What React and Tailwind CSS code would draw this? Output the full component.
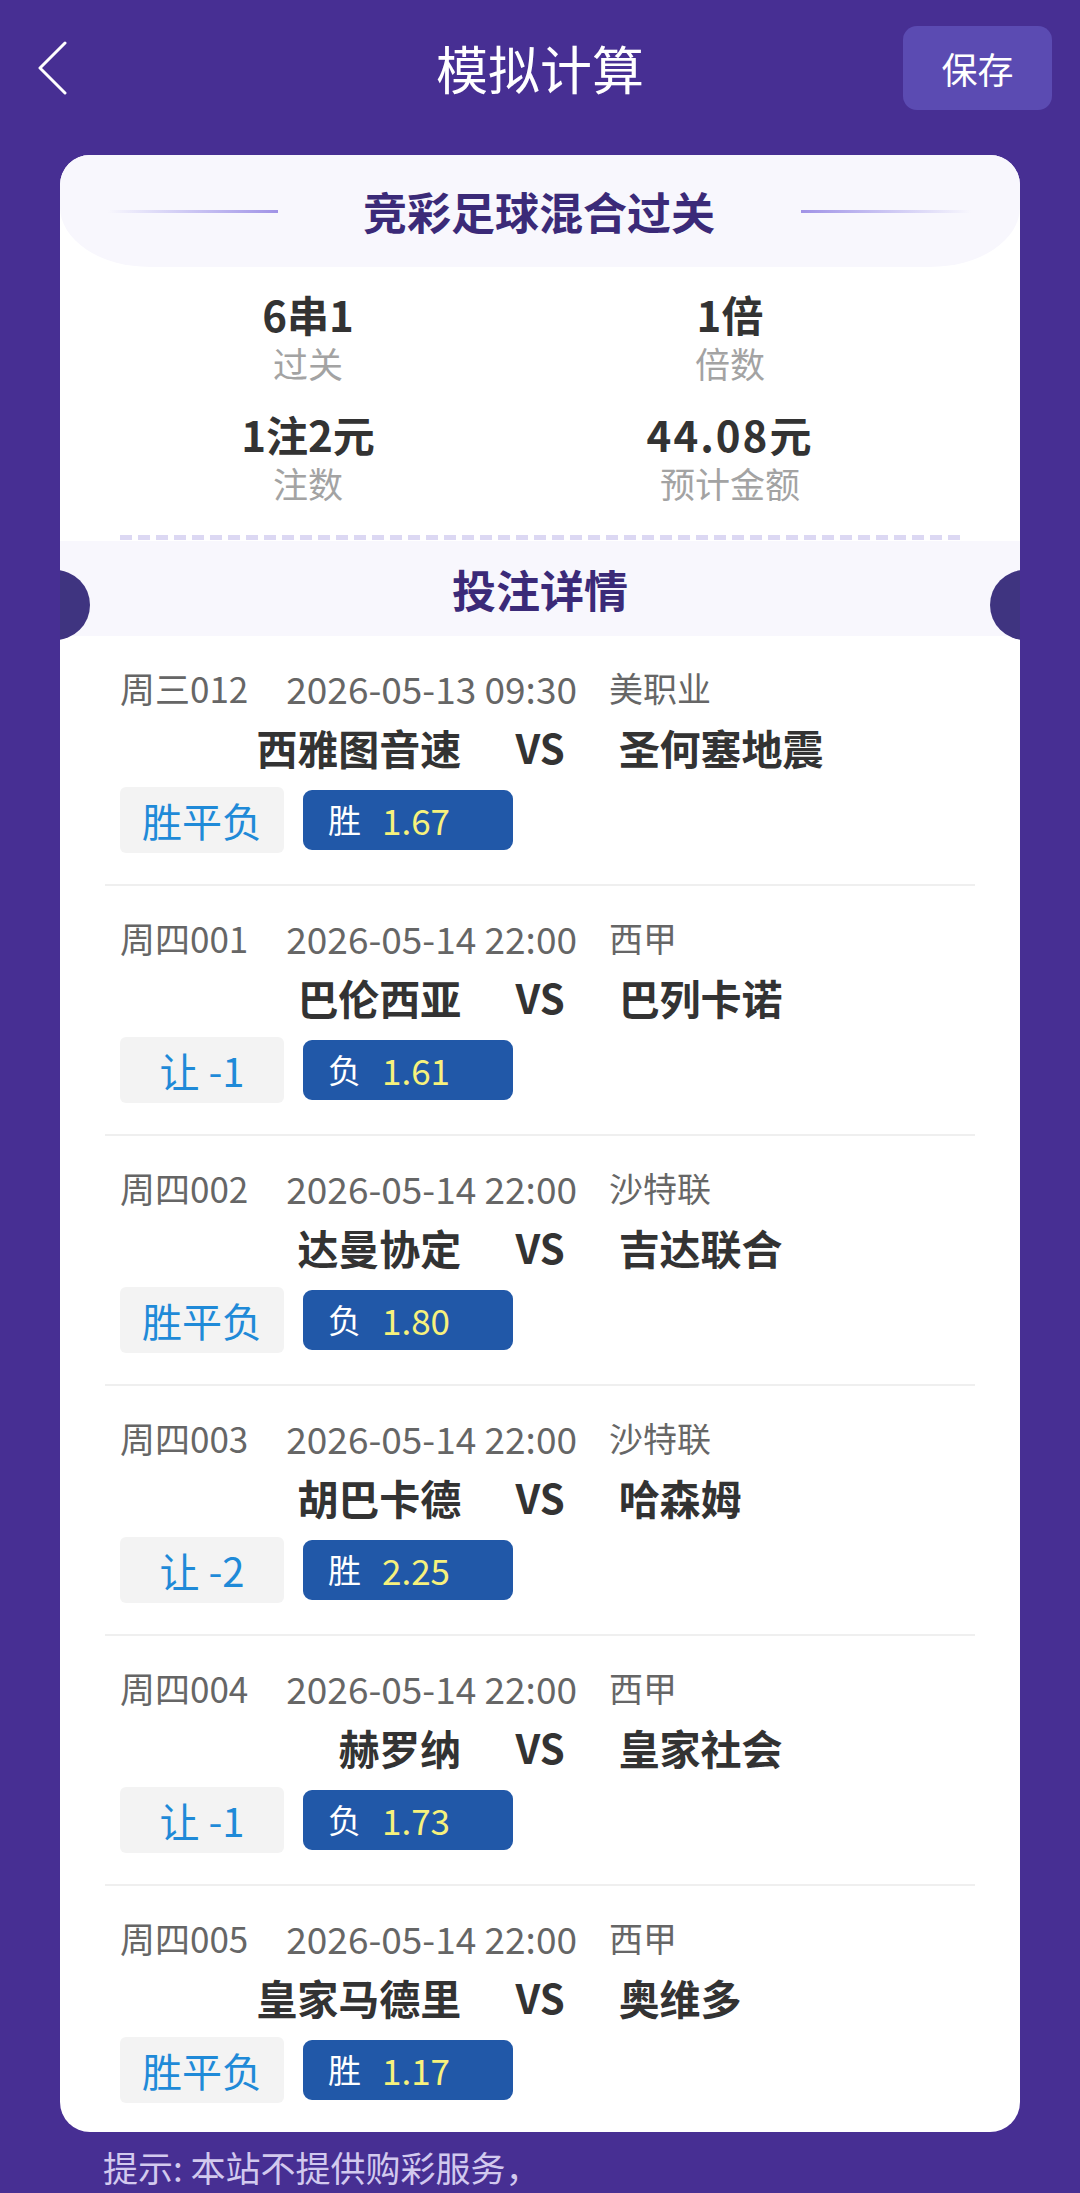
import React from "react";

const matches = [
  { code: "周三012", time: "2026-05-13 09:30", league: "美职业", home: "西雅图音速", away: "圣何塞地震", type: "胜平负", pick: "胜", odds: "1.67" },
  { code: "周四001", time: "2026-05-14 22:00", league: "西甲", home: "巴伦西亚", away: "巴列卡诺", type: "让 -1", pick: "负", odds: "1.61" },
  { code: "周四002", time: "2026-05-14 22:00", league: "沙特联", home: "达曼协定", away: "吉达联合", type: "胜平负", pick: "负", odds: "1.80" },
  { code: "周四003", time: "2026-05-14 22:00", league: "沙特联", home: "胡巴卡德", away: "哈森姆", type: "让 -2", pick: "胜", odds: "2.25" },
  { code: "周四004", time: "2026-05-14 22:00", league: "西甲", home: "赫罗纳", away: "皇家社会", type: "让 -1", pick: "负", odds: "1.73" },
  { code: "周四005", time: "2026-05-14 22:00", league: "西甲", home: "皇家马德里", away: "奥维多", type: "胜平负", pick: "胜", odds: "1.17" },
];

function MatchRow({ m, last }) {
  return (
    <div className={last ? "pt-[30px] pb-[29px]" : "pt-[30px]"}>
      <div className="flex items-center pl-[60px] h-[44px] leading-[44px] text-[#666666] whitespace-nowrap">
        <span className="text-[35px]">{m.code}</span>
        <span className="ml-[38px] text-[37px]">{m.time}</span>
        <span className="ml-[32px] text-[34px]">{m.league}</span>
      </div>
      <div className="mt-[12px] grid grid-cols-[1fr_auto_1fr] gap-x-[54px] items-center h-[50px] text-[41px] leading-[50px] font-bold text-[#333333]">
        <span className="text-right">{m.home}</span>
        <span className="text-[40px]">VS</span>
        <span className="text-left">{m.away}</span>
      </div>
      <div className="mt-[15px] flex items-center pl-[60px] gap-[19px]">
        <div className="w-[164px] h-[66px] rounded-[6px] bg-[#f3f3f3] flex items-center justify-center text-[40px] text-[#1f8ad8] whitespace-nowrap">
          {m.type}
        </div>
        <div className="w-[210px] h-[60px] rounded-[9px] bg-[#2158a8] flex items-center pl-[25px]">
          <span className="text-[33px] text-white">{m.pick}</span>
          <span className="ml-[21px] text-[35px] text-[#f7f17c]">{m.odds}</span>
        </div>
      </div>
      {!last && <div className="mt-[31px] mx-[45px] h-[2px] bg-[#efefef]" />}
    </div>
  );
}

export default function App() {
  return (
    <div
      className="w-[1080px] h-[2193px] overflow-hidden bg-[#472f93] relative"
      style={{ fontFamily: '"Noto Sans CJK SC", "Noto Sans", sans-serif' }}
    >
      {/* Header */}
      <div className="grid grid-cols-[1fr_auto_1fr] items-center pt-[26px] h-[110px]">
        <div className="pl-[38px] flex items-center">
          <svg width="30" height="54" viewBox="0 0 30 54" fill="none">
            <polyline points="27,2 2,27 27,52" stroke="white" strokeWidth="3" strokeLinecap="round" strokeLinejoin="round" />
          </svg>
        </div>
        <div className="text-[52px] leading-[64px] text-white">模拟计算</div>
        <div className="flex justify-end pr-[28px]">
          <div className="w-[149px] h-[84px] rounded-[14px] bg-[#5b4bb2] flex items-center justify-center text-[36px] text-white">
            保存
          </div>
        </div>
      </div>

      {/* Card */}
      <div className="relative mt-[45px] ml-[60px] w-[960px] bg-white rounded-[30px] overflow-hidden">
        {/* Card header */}
        <div className="h-[112px] bg-[#f8f7fd] rounded-bl-[90px_60px] rounded-br-[90px_60px] flex items-center pl-[48px]">
          <div className="w-[170px] h-[3px] bg-gradient-to-r from-[#f8f7fd] to-[#a193e6]" />
          <div className="ml-[84px] w-[354px] text-center text-[44px] leading-[54px] font-bold text-[#3b2a78] whitespace-nowrap">
            竞彩足球混合过关
          </div>
          <div className="ml-[85px] w-[170px] h-[3px] bg-gradient-to-r from-[#a193e6] to-[#f8f7fd]" />
        </div>

        {/* Stats */}
        <div className="grid grid-cols-[422px_422px] pl-[37px] pt-[24px] gap-y-[26px]">
          {[
            ["6串1", "过关"],
            ["1倍", "倍数"],
            ["1注2元", "注数"],
            ["44.08元", "预计金额"],
          ].map(([v, l]) => (
            <div key={l} className="flex flex-col items-center">
              <div className={"h-[46px] leading-[46px] font-bold text-[#333333] " + (l === "预计金额" ? "text-[42px] tracking-[2px]" : "text-[42px]")}>{v}</div>
              <div className="mt-[4px] h-[44px] text-[35px] leading-[44px] text-[#a3a3a3]">{l}</div>
            </div>
          ))}
        </div>

        {/* Dashes */}
        <div className="mt-[30px] mx-[60px] h-[5px] bg-[repeating-linear-gradient(90deg,#dcd8f3_0px,#dcd8f3_12px,transparent_12px,transparent_18px)]" />

        {/* Detail title */}
        <div className="mt-[1px] h-[95px] bg-[#f8f7fd] flex items-center justify-center text-[44px] font-bold text-[#3b2a78]">
          投注详情
        </div>

        {/* circles */}
        <div className="absolute left-[-40px] top-[415px] w-[70px] h-[70px] rounded-full bg-[#3f3480]" />
        <div className="absolute right-[-40px] top-[415px] w-[70px] h-[70px] rounded-full bg-[#3f3480]" />

        {/* Matches */}
        {matches.map((m, i) => (
          <MatchRow key={m.code} m={m} last={i === matches.length - 1} />
        ))}
      </div>

      {/* Footer */}
      <div className="mt-[14px] pl-[103px] h-[42px] text-[35px] leading-[42px] text-[#d2c9ee] whitespace-nowrap">
        提示: 本站不提供购彩服务，
      </div>
    </div>
  );
}
